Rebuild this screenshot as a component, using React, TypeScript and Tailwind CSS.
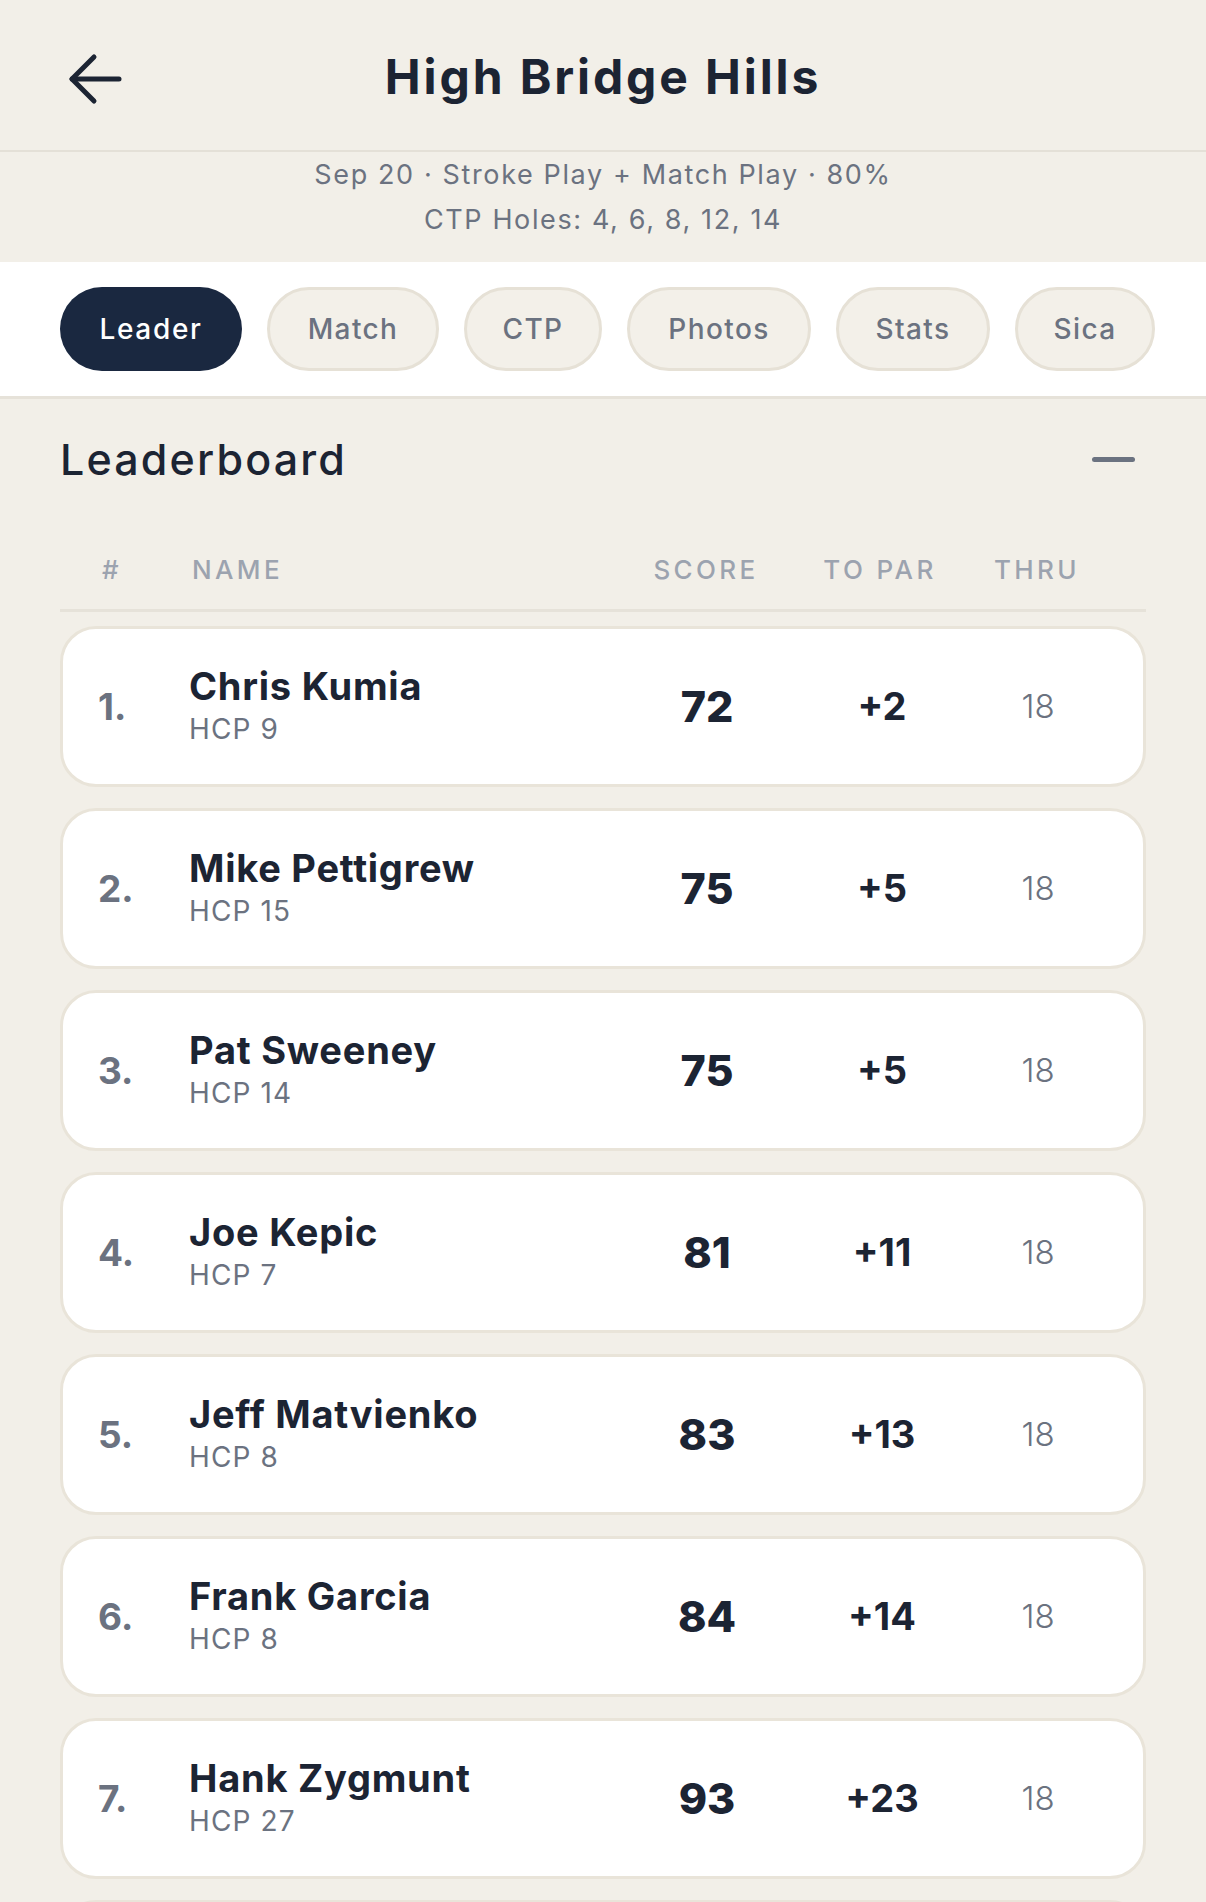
import React from 'react';

type Player = {
  rank: number;
  name: string;
  hcp: number;
  score: number;
  toPar: string;
  thru: number;
};

const players: Player[] = [
  { rank: 1, name: 'Chris Kumia', hcp: 9, score: 72, toPar: '+2', thru: 18 },
  { rank: 2, name: 'Mike Pettigrew', hcp: 15, score: 75, toPar: '+5', thru: 18 },
  { rank: 3, name: 'Pat Sweeney', hcp: 14, score: 75, toPar: '+5', thru: 18 },
  { rank: 4, name: 'Joe Kepic', hcp: 7, score: 81, toPar: '+11', thru: 18 },
  { rank: 5, name: 'Jeff Matvienko', hcp: 8, score: 83, toPar: '+13', thru: 18 },
  { rank: 6, name: 'Frank Garcia', hcp: 8, score: 84, toPar: '+14', thru: 18 },
  { rank: 7, name: 'Hank Zygmunt', hcp: 27, score: 93, toPar: '+23', thru: 18 },
];

const tabs = [
  { label: 'Leader', w: 'w-[182px]' },
  { label: 'Match', w: 'w-[172px]' },
  { label: 'CTP', w: 'w-[138px]' },
  { label: 'Photos', w: 'w-[184px]' },
  { label: 'Stats', w: 'w-[154px]' },
  { label: 'Sica', w: 'w-[140px]' },
];

const cols = 'grid grid-cols-[91px_1fr_180px_170px_142px] items-center pl-[35px] pr-[34px]';

function BackArrow() {
  return (
    <svg width="56" height="52" viewBox="0 0 56 52" fill="none" stroke="#1c2433" strokeWidth="5" strokeLinecap="round" strokeLinejoin="round">
      <path d="M52 26H5" />
      <path d="M27 4L5 26L27 48" />
    </svg>
  );
}

function Row({ p }: { p: Player }) {
  return (
    <div className={`${cols} h-[161px] rounded-[36px] border-[3px] border-[#e9e4d9] bg-white`}>
      <div className="text-[37px] font-bold text-[#6b7280]">{p.rank}.</div>
      <div className="flex flex-col">
        <div className="text-[38px] font-bold leading-[44px] tracking-[0.02em] text-[#1c2433]">{p.name}</div>
        <div className="text-[28px] leading-[42px] tracking-[0.04em] text-[#6b7280]">HCP {p.hcp}</div>
      </div>
      <div className="text-center text-[43px] font-extrabold text-[#1c2433]">{p.score}</div>
      <div className="text-center text-[38px] font-bold text-[#1c2433]">{p.toPar}</div>
      <div className="text-center text-[33px] font-light text-[#6b7280]">{p.thru}</div>
    </div>
  );
}

export default function App() {
  return (
    <div className="h-[1902px] w-[1206px] overflow-hidden bg-[#f2efe8] font-['Inter',sans-serif]">
      {/* Top bar */}
      <div className="relative flex h-[152px] items-center justify-center border-b-2 border-[#e4e0d7]">
        <div className="absolute left-[67px] top-[53px]">
          <BackArrow />
        </div>
        <h1 className="pt-[4px] text-[48px] font-bold tracking-[0.06em] text-[#1c2433]">High Bridge Hills</h1>
      </div>

      {/* Round info */}
      <div className="flex h-[110px] flex-col items-center text-[27px] leading-[45px] tracking-[0.06em] text-[#6b7280]">
        <div>Sep 20 · Stroke Play + Match Play · 80%</div>
        <div>CTP Holes: 4, 6, 8, 12, 14</div>
      </div>

      {/* Tabs */}
      <div className="flex gap-[25px] overflow-hidden border-b-[3px] border-[#e6e2d9] bg-white px-[60px] py-[25px]">
        {tabs.map((t, i) => (
          <div
            key={t.label}
            className={
              i === 0
                ? `flex h-[84px] ${t.w} shrink-0 items-center justify-center rounded-full bg-[#1a2840] text-[28px] font-medium tracking-[0.06em] text-white`
                : `flex h-[84px] ${t.w} shrink-0 items-center justify-center rounded-full border-[3px] border-[#e6e1d6] bg-[#f3f0e9] text-[28px] font-medium tracking-[0.05em] text-[#6b7280]`
            }
          >
            {t.label}
          </div>
        ))}
      </div>

      {/* Leaderboard */}
      <div className="px-[60px]">
        <div className="flex h-[118px] items-center justify-between pt-[2px]">
          <h2 className="text-[43px] font-medium tracking-[0.05em] text-[#1c2433]">Leaderboard</h2>
          <div className="mr-[11px] h-[5px] w-[43px] rounded-full bg-[#6b7280]" />
        </div>

        <div className={`${cols} h-[95px] border-b-[3px] border-[#e6e2d9] pt-[12px] text-[26px] font-medium tracking-[0.13em] text-[#9ca3af]`}>
          <div className="pl-[7px]">#</div>
          <div className="pl-[6px]">NAME</div>
          <div className="pr-[8px] text-center">SCORE</div>
          <div className="pr-[10px] text-center">TO PAR</div>
          <div className="pr-[8px] text-center">THRU</div>
        </div>

        <div className="mt-[14px] flex flex-col gap-[21px]">
          {players.map((p) => (
            <Row key={p.rank} p={p} />
          ))}
          <div className="h-[161px] rounded-[36px] border-[3px] border-[#e9e4d9] bg-white" />
        </div>
      </div>
    </div>
  );
}
